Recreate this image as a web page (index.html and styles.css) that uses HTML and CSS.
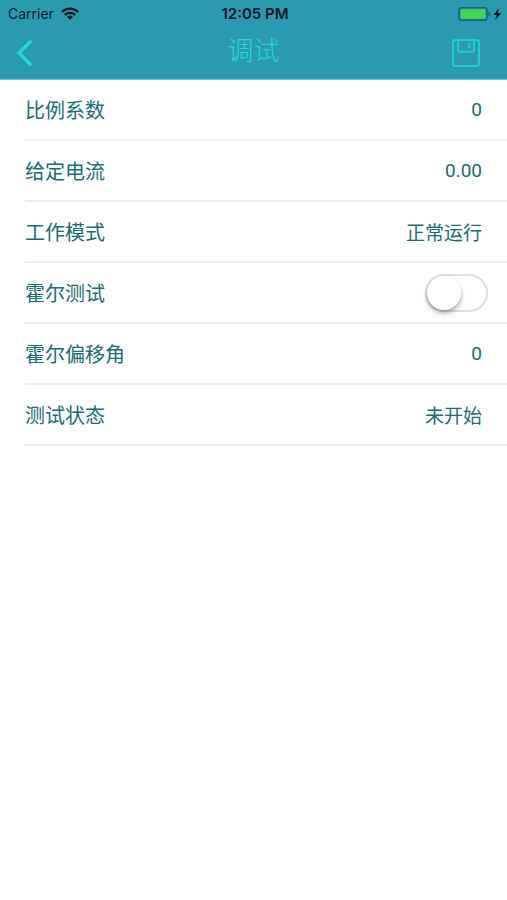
FILE: index.html
```html
<!DOCTYPE html>
<html lang="zh-CN">
<head>
  <meta charset="UTF-8">
  <meta name="viewport" content="width=device-width, initial-scale=1">
  <title>调试</title>
  <link rel="stylesheet" href="styles.css">
</head>
<body>

  <header class="header">
    <div class="status">
      <div class="carrier">
        <span>Carrier</span>
        <svg class="wifi" width="18" height="13" viewBox="0 0 18 13" fill="none" stroke="#06181e" stroke-width="2.4">
          <path d="M1 4.8a11.6 11.6 0 0 1 16 0"/>
          <path d="M3.8 7.9a7.6 7.6 0 0 1 10.4 0"/>
          <path d="M9 12.8L6 10a4.4 4.4 0 0 1 6 0z" fill="#06181e" stroke="none"/>
        </svg>
      </div>
      <span class="time">12:05 PM</span>
      <div class="battery">
        <svg width="44" height="16" viewBox="0 0 44 16">
          <rect x="1" y="1.7" width="28" height="12.6" rx="2.5" fill="#2b9ab0" stroke="#176078" stroke-width="1.5"/>
          <rect x="2.5" y="3.2" width="25" height="9.6" rx="1" fill="#43d553"/>
          <path d="M30.5 5.5q2 .6 2 2.5t-2 2.5z" fill="#176078"/>
          <path d="M41 2l-5.5 7h3.2l-1.7 5.2 6.3-7.2h-3.5z" fill="#06181e"/>
        </svg>
      </div>
    </div>

    <nav class="nav">
      <button class="icono volver" type="button" aria-label="返回">
        <svg width="18" height="28" viewBox="0 0 18 28" fill="none" stroke="#21dcd2" stroke-width="3.4">
          <path d="M16.2 1.8L4 14l12.2 12.2"/>
        </svg>
      </button>
      <h1>调试</h1>
      <button class="icono guardar" type="button" aria-label="保存">
        <svg width="30" height="30" viewBox="0 0 30 30" fill="none" stroke="#21d2cb" stroke-width="1.9">
          <rect x="2" y="2" width="26" height="26" rx="2.5"/>
          <path d="M7.2 2v10.5q0 1.2 1.2 1.2h13.2q1.2 0 1.2-1.2V2"/>
          <path d="M18.3 5.2v5.2" stroke-width="2"/>
        </svg>
      </button>
    </nav>
  </header>

  <main class="lista">
    <div class="fila">
      <span>比例系数</span>
      <span class="valor">0</span>
    </div>
    <div class="fila">
      <span>给定电流</span>
      <span class="valor">0.00</span>
    </div>
    <div class="fila">
      <span>工作模式</span>
      <span class="valor">正常运行</span>
    </div>
    <div class="fila fila-switch">
      <label for="hall">霍尔测试</label>
      <input class="switch" type="checkbox" role="switch" id="hall">
    </div>
    <div class="fila">
      <span>霍尔偏移角</span>
      <span class="valor">0</span>
    </div>
    <div class="fila">
      <span>测试状态</span>
      <span class="valor">未开始</span>
    </div>
  </main>

</body>
</html>
```

FILE: styles.css
```css
* {
  box-sizing: border-box;
}

body {
  margin: 0;
  font-family: Roboto, "Noto Sans CJK SC", sans-serif;
  background-color: #fff;
  color: #1b6c74;
}

.header {
  background-color: #2b9ab0;
  border-bottom: 1px solid #7cc3d0;
}

.status {
  display: grid;
  grid-template-columns: 1fr auto 1fr;
  align-items: center;
  height: 27px;
  padding: 0 5px 0 8px;
  font-family: Inter, sans-serif;
  font-size: 14px;
  color: #06181e;
}

.carrier {
  display: flex;
  align-items: center;
  gap: 7px;
}

.time {
  font-size: 15px;
  font-weight: 600;
}

.battery {
  display: flex;
  justify-content: flex-end;
}

.nav {
  display: grid;
  grid-template-columns: 1fr auto 1fr;
  align-items: center;
  height: 52px;
  padding: 0 15px;
}

.nav h1 {
  margin: 0;
  padding-bottom: 4px;
  font-size: 26px;
  line-height: 40px;
  font-weight: 300;
  color: #21dcd2;
}

.icono {
  display: flex;
  padding: 0;
  border: none;
  background: none;
  cursor: pointer;
}

.guardar {
  justify-self: end;
  margin-right: 11px;
}

.fila {
  display: flex;
  justify-content: space-between;
  align-items: center;
  height: 61px;
  margin-left: 25px;
  padding-right: 25px;
  border-bottom: 2px solid #eee;
  font-size: 20px;
}

.fila-switch {
  padding-right: 19px;
}

.valor {
  font-size: 19px;
}

.switch {
  appearance: none;
  width: 63px;
  height: 38px;
  margin: 0;
  border: 2px solid #dfdfdf;
  border-radius: 19px;
  background-color: #fff;
  cursor: pointer;
}

.switch::before {
  content: "";
  display: block;
  width: 34px;
  height: 34px;
  border-radius: 50%;
  background-color: #fff;
  box-shadow: 0 3px 5px rgba(0, 0, 0, 0.35);
}

.switch:checked {
  background-color: #43d553;
  border-color: #43d553;
}

.switch:checked::before {
  margin-left: auto;
}
```
